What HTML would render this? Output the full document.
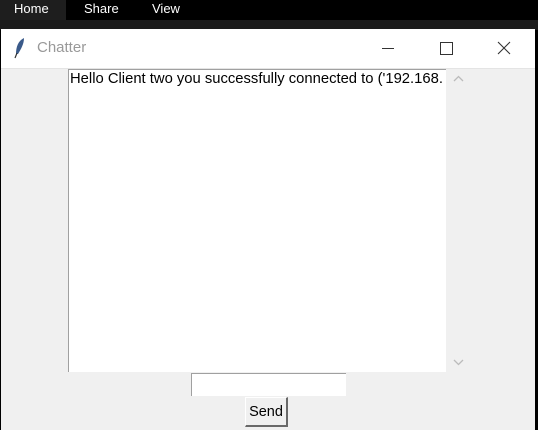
<!DOCTYPE html>
<html><head><style>
body{margin:0;width:538px;height:430px;background:#000;position:relative;overflow:hidden;font-family:"Liberation Sans",sans-serif}
.a{position:absolute}
</style></head><body>
<div class="a" style="left:0;top:0;width:538px;height:20px;background:#000"></div>
<div class="a" style="left:0;top:0;width:66px;height:20px;background:#1e1e1e"></div>
<div class="a" style="left:14px;top:1px;color:#fff;font-size:13px">Home</div>
<div class="a" style="left:84px;top:1px;color:#fff;font-size:13px">Share</div>
<div class="a" style="left:152px;top:1px;color:#fff;font-size:13px">View</div>
<div class="a" style="left:0;top:20px;width:538px;height:10px;background:#1b1b1b"></div>
<div class="a" style="left:1px;top:29px;width:534px;height:401px;background:#f0f0f0"></div>
<div class="a" style="left:1px;top:29px;width:534px;height:39px;background:#fff;border-bottom:1px solid #e4e4e4"></div>
<svg class="a" style="left:12px;top:37px" width="16" height="22" viewBox="0 0 16 22"><path d="M12 1 C6 4 4 10 4 17 L6 17 C9 12 12 7 12 1Z" fill="#3a5a8a"/><path d="M5 16 L3 21" stroke="#333" stroke-width="1.2"/></svg>
<div class="a" style="left:37px;top:39px;color:#999;font-size:15px">Chatter</div>
<div class="a" style="left:382px;top:48px;width:12px;height:1px;background:#333"></div>
<div class="a" style="left:440px;top:42px;width:11px;height:11px;border:1px solid #333"></div>
<svg class="a" style="left:497px;top:41px" width="14" height="14"><path d="M1 1L13 13M13 1L1 13" stroke="#333" stroke-width="1.1"/></svg>
<div class="a" style="left:68px;top:69px;width:377px;height:302px;background:#fff;border-left:1px solid #a0a0a0;border-top:1px solid #a0a0a0"></div>
<div class="a" style="left:70px;top:71px;font-size:14.8px;color:#000;white-space:nowrap;width:374px;overflow:hidden">Hello Client two you successfully connected to ('192.168.</div>
<div class="a" style="left:446px;top:69px;width:24px;height:302px;background:#f0f0f0"></div>
<svg class="a" style="left:453px;top:75px" width="11" height="8"><path d="M1 6L5.5 1.5L10 6" stroke="#bbb" fill="none" stroke-width="1.3"/></svg>
<svg class="a" style="left:453px;top:358px" width="11" height="8"><path d="M1 2L5.5 6.5L10 2" stroke="#bbb" fill="none" stroke-width="1.3"/></svg>
<div class="a" style="left:191px;top:373px;width:154px;height:22px;background:#fff;border-left:1px solid #a0a0a0;border-top:1px solid #a0a0a0"></div>
<div class="a" style="left:245px;top:397px;width:43px;height:30px;background:#f0f0f0;border:1px solid #fff;border-right:2px solid #696969;border-bottom:2px solid #696969;box-sizing:border-box;text-align:center;font-size:14.5px;line-height:28px">Send</div>
</body></html>
